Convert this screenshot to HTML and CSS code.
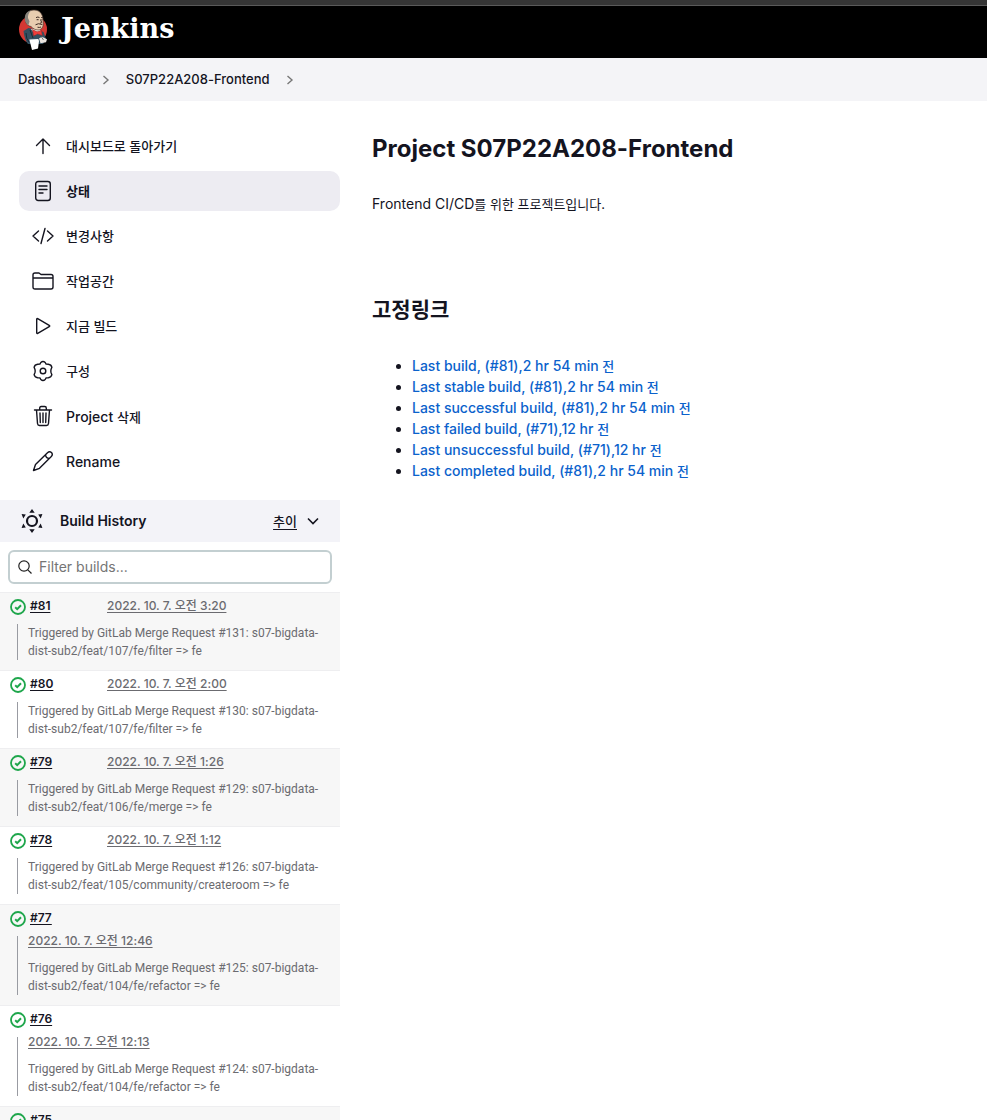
FILE: index.html
```html
<!DOCTYPE html>
<html lang="ko">
<head>
<meta charset="utf-8">
<title>S07P22A208-Frontend [Jenkins]</title>
<meta name="viewport" content="width=device-width, initial-scale=1">
<link rel="stylesheet" href="styles.css">
</head>
<body>
<svg class="sprite" aria-hidden="true">
  <symbol id="ok" viewBox="0 0 16 16"><circle cx="8" cy="8" r="7" fill="none" stroke="#1ea64b" stroke-width="1.8"/><path d="M5.200 8.300l2 1.900 3.800-4" fill="none" stroke="#1ea64b" stroke-width="2"/></symbol>
  <symbol id="chev" viewBox="0 0 8 10"><path d="M1.500 1l4.500 4-4.500 4" fill="none" stroke="#777" stroke-width="1.4"/></symbol>
</svg>
<header class="header">
  <a class="brand" href="#">
    <svg class="butler" viewBox="0 0 30 42" aria-hidden="true">
      <ellipse cx="15" cy="20.500" rx="14" ry="14" fill="#d33833"/>
      <path d="M5.500 22l5-3 10 2 5 2 2.500 7-3 5H10q-3.500-4-4.500-13z" fill="#335061"/>
      <path d="M8 24q0 6 3 9M12 21l3 8" fill="none" stroke="#172b36" stroke-width="1"/>
      <path d="M13 20l4.500 6 5-4-1-3z" fill="#f7ebe0"/>
      <path d="M7.500 12C6 5 10 1 16 1c6.500 0 9 5 9 10l.3 4c0 3-2 6-5.300 6-3 0-5-1.500-7-3.500-3-.5-5-2.500-5.500-5.500z" fill="#e8cdb0" stroke="#4b3a32" stroke-width=".7"/>
      <path d="M7.500 13C5.500 7 8.500 2 13 1.400q-3.500 3.600-3 7.600l1.500 3.500-1.200 4z" fill="#85827b"/>
      <path d="M18 8.600q2-1.200 3.500 0m1.700 0q1.300-.8 1.800.3M18.600 10.700h2m2.800 0h1M22.500 10.500l1.200 3-1.700.8M17.500 15.800q2.500-2 6.800-.3M19.500 18.200q2 .6 3.500-.2" fill="none" stroke="#3d2b24" stroke-width="1"/>
      <path d="M14.500 20.500l4.500 2.300 4.500-1.300.8 5-4.800-1.500-4 2z" fill="#ef3d3a" stroke="#8d2322" stroke-width=".5"/>
      <path d="M11.300 30.500l9-.5.700 2-1 7.500-6 1.500-1.500-6z" fill="#fff"/>
      <path d="M21 29.500l3-1.700 5 2.500-1 3-5.500 1z" fill="#e9e3dd"/>
      <path d="M23.500 28l2 3" stroke="#555" stroke-width=".8"/>
    </svg>
    <span class="wordmark">Jenkins</span>
  </a>
</header>
<nav class="crumbs" aria-label="Breadcrumb">
  <a href="#">Dashboard</a><svg class="chev"><use href="#chev"/></svg>
  <a href="#">S07P22A208-Frontend</a><svg class="chev"><use href="#chev"/></svg>
</nav>
<div class="page">
  <aside class="side">
    <nav class="tasks">
      <a class="task" href="#"><svg viewBox="0 0 22 22"><path d="M11 18.500V4M4.500 10.500L11 4l6.500 6.500"/></svg><span class="ko">대시보드로 돌아가기</span></a>
      <a class="task active" href="#"><svg viewBox="0 0 22 22"><rect x="3.700" y="1.500" width="14.600" height="19" rx="2.500"/><path d="M7 6h8M7 9.500h8M7 13h4"/></svg><span class="ko">상태</span></a>
      <a class="task" href="#"><svg viewBox="0 0 22 22"><path d="M6.500 6L1 11l5.500 5M15.500 6l5.500 5-5.500 5M13 3.500L9 18.500"/></svg><span class="ko">변경사항</span></a>
      <a class="task" href="#"><svg viewBox="0 0 22 22"><path d="M1 17V5q0-2 2-2h4l2 1.500h10q2 0 2 2V17q0 2-2 2H3q-2 0-2-2zM1 8h20"/></svg><span class="ko">작업공간</span></a>
      <a class="task" href="#"><svg viewBox="0 0 22 22"><path d="M4.700 4.200v13.600q0 1 1 .5l11.500-6.600q1-.7 0-1.400L5.700 3.700q-1-.5-1 .5z"/></svg><span class="ko">지금 빌드</span></a>
      <a class="task" href="#"><svg viewBox="0 0 22 22"><circle cx="11" cy="11" r="2.800"/><path d="M8.800 2.500Q11 .5 13.200 2.500l.9 1.600 2.200.2q3 .4 3.600 3l-.8 1.900q-.5 1.800 0 3.600l.8 1.900q-.6 2.600-3.600 3l-2.200.2-.9 1.600Q11 21.500 8.800 19.500l-.9-1.600-2.200-.2q-3-.4-3.600-3l.8-1.900q.5-1.800 0-3.600l-.8-1.900q.6-2.600 3.600-3l2.200-.2z"/></svg><span class="ko">구성</span></a>
      <a class="task" href="#"><svg viewBox="0 0 22 22"><path d="M2.500 5h17M4.500 5l1 13.500q.2 2 2 2h7q1.800 0 2-2l1-13.500M7.700 5V3.200q0-1.700 1.500-1.700h3.600q1.500 0 1.500 1.700V5M8 8l.3 9.500M11 8v9.500M14 8l-.3 9.500"/></svg><span>Project <span class="ko">삭제</span></span></a>
      <a class="task" href="#"><svg viewBox="0 0 22 22"><path d="M1.500 20.500l2-6L15.500 2.700q2-1.800 4-.2 1.700 2-.2 4L7.500 18.300zM13.500 4.700q.3 3.500 3.800 3.800"/></svg><span>Rename</span></a>
    </nav>
    <section class="history">
      <div class="history-head">
        <svg class="sun" viewBox="0 0 24 24"><circle cx="12" cy="12" r="5" fill="none" stroke="#14141f" stroke-width="2.200"/><path d="M12 0l2.700 3.800H9.300zM12 24l2.700-3.800H9.300zM1.600 5l4.200.5-2.500 4zM22.400 5l-4.200.5 2.500 4zM1.600 19l4.200-.5-2.500-4zM22.400 19l-4.200-.5 2.500-4z" fill="#14141f"/></svg>
        <h2>Build History</h2>
        <a class="ko" href="#">추이</a>
        <button class="toggle" type="button" aria-label="Collapse"><svg viewBox="0 0 12 8"><path d="M1 1.500l5 5 5-5" fill="none" stroke="#14141f" stroke-width="1.600"/></svg></button>
      </div>
      <label class="filter">
        <svg viewBox="0 0 14 14"><circle cx="6" cy="6" r="5.200"/><path d="M9.800 9.800l3.700 3.700"/></svg>
        <input type="search" placeholder="Filter builds..." aria-label="Filter builds">
      </label>
      <ol class="builds">
        <li><div class="top"><svg class="ok"><use href="#ok"/></svg><a class="num" href="#">#81</a><a class="date" href="#">2022. 10. 7. 오전 3:20</a></div><div class="note"><p>Triggered by GitLab Merge Request #131: s07-bigdata-dist-sub2/feat/107/fe/filter =&gt; fe</p></div></li>
        <li><div class="top"><svg class="ok"><use href="#ok"/></svg><a class="num" href="#">#80</a><a class="date" href="#">2022. 10. 7. 오전 2:00</a></div><div class="note"><p>Triggered by GitLab Merge Request #130: s07-bigdata-dist-sub2/feat/107/fe/filter =&gt; fe</p></div></li>
        <li><div class="top"><svg class="ok"><use href="#ok"/></svg><a class="num" href="#">#79</a><a class="date" href="#">2022. 10. 7. 오전 1:26</a></div><div class="note"><p>Triggered by GitLab Merge Request #129: s07-bigdata-dist-sub2/feat/106/fe/merge =&gt; fe</p></div></li>
        <li><div class="top"><svg class="ok"><use href="#ok"/></svg><a class="num" href="#">#78</a><a class="date" href="#">2022. 10. 7. 오전 1:12</a></div><div class="note"><p>Triggered by GitLab Merge Request #126: s07-bigdata-dist-sub2/feat/105/community/createroom =&gt; fe</p></div></li>
        <li><div class="top"><svg class="ok"><use href="#ok"/></svg><a class="num" href="#">#77</a></div><div class="note"><a class="date" href="#">2022. 10. 7. 오전 12:46</a><p>Triggered by GitLab Merge Request #125: s07-bigdata-dist-sub2/feat/104/fe/refactor =&gt; fe</p></div></li>
        <li><div class="top"><svg class="ok"><use href="#ok"/></svg><a class="num" href="#">#76</a></div><div class="note"><a class="date" href="#">2022. 10. 7. 오전 12:13</a><p>Triggered by GitLab Merge Request #124: s07-bigdata-dist-sub2/feat/104/fe/refactor =&gt; fe</p></div></li>
        <li><div class="top"><svg class="ok"><use href="#ok"/></svg><a class="num" href="#">#75</a></div></li>
      </ol>
    </section>
  </aside>
  <main class="main">
    <h1>Project S07P22A208-Frontend</h1>
    <p class="desc">Frontend CI/CD<span class="ko">를 위한 프로젝트입니다.</span></p>
    <h2>고정링크</h2>
    <ul class="links">
      <li><a href="#">Last build, (#81),2 hr 54 min <span class="ko">전</span></a></li>
      <li><a href="#">Last stable build, (#81),2 hr 54 min <span class="ko">전</span></a></li>
      <li><a href="#">Last successful build, (#81),2 hr 54 min <span class="ko">전</span></a></li>
      <li><a href="#">Last failed build, (#71),12 hr <span class="ko">전</span></a></li>
      <li><a href="#">Last unsuccessful build, (#71),12 hr <span class="ko">전</span></a></li>
      <li><a href="#">Last completed build, (#81),2 hr 54 min <span class="ko">전</span></a></li>
    </ul>
  </main>
</div>
</body>
</html>
```
FILE: styles.css
```css
* { box-sizing: border-box; }
body {
  margin: 0;
  height: 100vh;
  overflow: hidden;
  background: #fff;
  color: #14141f;
  font: 14px/21px Inter, "Noto Sans CJK KR", sans-serif;
  font-feature-settings: "calt" 0;
}
a { color: inherit; text-decoration: none; }
h1, h2, p, ul, ol { margin: 0; padding: 0; }
.sprite { display: none; }
.ko { font-size: 13px; line-height: 1; }

.header { height: 58px; background: #000; border-top: 5px solid #353535; box-shadow: inset 0 1px #5a5a5a; padding: 4px 18px; }
.brand { display: inline-flex; align-items: center; gap: 13px; color: #fff; }
.butler { width: 30px; height: 42px; }
.wordmark { padding-bottom: 3px; font: bold 27px/36px "DejaVu Serif", "Liberation Serif", serif; }

.crumbs { display: flex; align-items: center; gap: 16px; height: 43px; padding: 0 18px; background: #f4f4f7; font-size: 13px; font-weight: 500; }
.chev { width: 8px; height: 10px; }

.page { display: grid; grid-template-columns: 340px 1fr; }
.tasks { display: flex; flex-direction: column; gap: 5px; padding: 25px 0 19px 19px; }
.task { display: flex; align-items: center; gap: 12px; height: 40px; padding: 0 13px; border-radius: 10px; font-weight: 500; }
.task.active { background: #edecf2; font-weight: 600; }
.task svg { width: 22px; height: 22px; fill: none; stroke: #14141f; stroke-width: 1.4; stroke-linecap: round; stroke-linejoin: round; }

.history-head { display: flex; align-items: center; height: 42px; padding: 0 20px; background: #f3f3f8; }
.sun { width: 24px; height: 24px; margin-right: 16px; }
.history-head h2 { flex: 1; padding-bottom: 2px; font-size: 14px; font-weight: 600; }
.history-head a { text-decoration: underline; text-underline-offset: 3px; font-weight: 500; }
.toggle { width: 14px; padding: 0; margin-left: 9px; border: 0; background: none; line-height: 0; }
.toggle svg { width: 12px; height: 8px; }
.filter { display: flex; align-items: center; gap: 7px; height: 34px; margin: 8px; padding: 0 8px; border: 2px solid #c3cfd1; border-radius: 6px; }
.filter svg { width: 14px; height: 14px; fill: none; stroke: #222; stroke-width: 1.2; }
.filter input { flex: 1; min-width: 0; border: 0; padding: 0 0 2px; outline: 0; background: none; font: inherit; }
.filter input::placeholder { color: #757575; }

.builds { list-style: none; font-size: 12px; line-height: 18px; color: #6b6b70; }
.builds li { border-top: 1px solid #eeeef0; padding: 3px 8px 10px 10px; }
.builds li:nth-child(odd) { background: #f7f7f7; }
.top { display: grid; grid-template-columns: 20px 77px 1fr; align-items: center; height: 19px; }
.ok { width: 16px; height: 16px; margin-top: 2px; }
.num { color: #14141f; font-weight: 600; text-decoration: underline; text-underline-offset: 2px; }
.date { font-weight: 500; text-decoration: underline; text-underline-offset: 2px; }
.note { margin: 9px 0 0 7px; padding-left: 10px; border-left: 1px solid #999ba2; }
.note p { font-family: Roboto, "Noto Sans CJK KR", sans-serif; }
.note .date { display: block; height: 23px; line-height: 10px; }

.main { padding: 30px 32px; }
.main h1 { font-size: 24px; line-height: 36px; font-weight: 700; }
.desc { margin-top: 26px; }
.main h2 { margin-top: 81px; font-size: 21px; line-height: 30px; font-weight: 600; }
.links { margin-top: 30px; padding-left: 40px; }
.links a { color: #0b62cc; font-weight: 500; }
```
